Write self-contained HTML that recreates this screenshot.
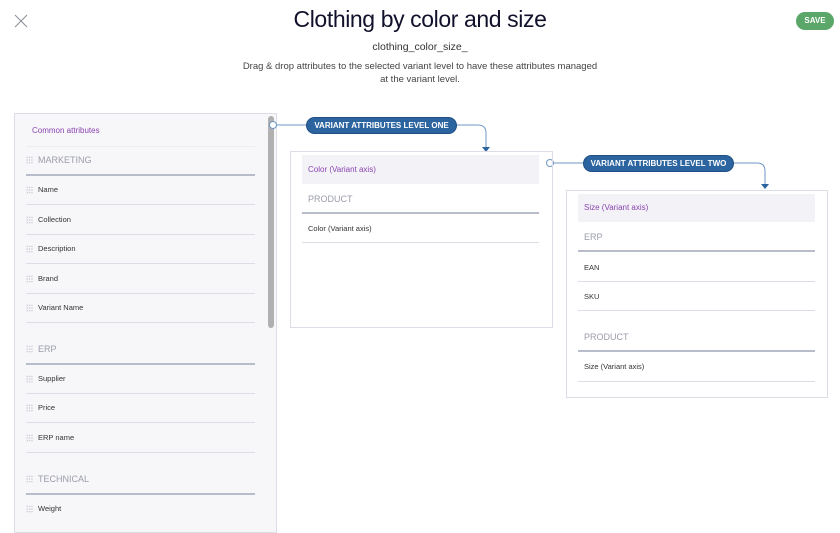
<!DOCTYPE html>
<html><head><meta charset="utf-8"><style>
*{margin:0;padding:0;box-sizing:border-box}
body{width:840px;height:521px;overflow:hidden;background:#fff;font-family:"Liberation Sans",sans-serif;position:relative;color:#222}
.a{position:absolute}
.t{position:absolute;white-space:nowrap}
.line{position:absolute;height:1px;background:#dcdde6}
.thick{position:absolute;height:2px;background:#b8bccb}
.grp{color:#9a9daa;font-size:9px}
.it{font-size:7.5px;color:#333}
.dots{position:absolute;width:7px;height:8px;background-image:radial-gradient(circle,#c4c6d0 0.6px,transparent 0.8px);background-size:2.4px 2.7px}
.pill{position:absolute;background:#2c64a0;color:#fff;font-weight:bold;font-size:8px;border-radius:9px;text-align:center;border:1px solid #1f4f85}
</style></head><body>
<svg class="a" style="left:14px;top:14px" width="14" height="14"><path d="M1 1L13 13M13 1L1 13" stroke="#8a8d99" stroke-width="1"/></svg>
<div class="t" style="left:0;width:840px;text-align:center;top:6px;font-size:23px;color:#11112c;letter-spacing:-0.4px">Clothing by color and size</div>
<div class="t" style="left:0;width:840px;text-align:center;top:41px;font-size:10.5px;color:#333">clothing_color_size_</div>
<div class="t" style="left:0;width:840px;text-align:center;top:60px;font-size:9.5px;color:#444;line-height:13px;white-space:normal;padding:0 240px">Drag &amp; drop attributes to the selected variant level to have these attributes managed at the variant level.</div>
<div class="a" style="left:796px;top:12px;width:38px;height:18px;background:#5aa769;border-radius:9px;color:#fff;font-size:8px;font-weight:bold;text-align:center;line-height:18px">SAVE</div>

<div class="a" style="left:14px;top:113px;width:263px;height:420px;background:#f7f7f9;border:1px solid #dcdde6"></div>
<div class="a" style="left:268px;top:116px;width:6px;height:212px;background:#b0b0b0;border-radius:3px"></div>
<div class="t" style="left:32px;top:126px;font-size:8px;color:#8a44b0">Common attributes</div>
<div class="line" style="left:26px;top:146px;width:229px;background:#ececf1"></div>
<div class="dots" style="left:26px;top:156px"></div><div class="t grp" style="left:38px;top:155px">MARKETING</div>
<div class="thick" style="left:26px;top:174px;width:229px"></div>
<div class="dots" style="left:26px;top:186px"></div><div class="t it" style="left:38px;top:185px">Name</div>
<div class="line" style="left:26px;top:204px;width:229px"></div>
<div class="dots" style="left:26px;top:216px"></div><div class="t it" style="left:38px;top:215px">Collection</div>
<div class="line" style="left:26px;top:234px;width:229px"></div>
<div class="dots" style="left:26px;top:245px"></div><div class="t it" style="left:38px;top:244px">Description</div>
<div class="line" style="left:26px;top:263px;width:229px"></div>
<div class="dots" style="left:26px;top:275px"></div><div class="t it" style="left:38px;top:274px">Brand</div>
<div class="line" style="left:26px;top:293px;width:229px"></div>
<div class="dots" style="left:26px;top:304px"></div><div class="t it" style="left:38px;top:303px">Variant Name</div>
<div class="line" style="left:26px;top:322px;width:229px"></div>
<div class="dots" style="left:26px;top:345px"></div><div class="t grp" style="left:38px;top:344px">ERP</div>
<div class="thick" style="left:26px;top:363px;width:229px"></div>
<div class="dots" style="left:26px;top:375px"></div><div class="t it" style="left:38px;top:374px">Supplier</div>
<div class="line" style="left:26px;top:393px;width:229px"></div>
<div class="dots" style="left:26px;top:404px"></div><div class="t it" style="left:38px;top:403px">Price</div>
<div class="line" style="left:26px;top:422px;width:229px"></div>
<div class="dots" style="left:26px;top:434px"></div><div class="t it" style="left:38px;top:433px">ERP name</div>
<div class="line" style="left:26px;top:452px;width:229px"></div>
<div class="dots" style="left:26px;top:475px"></div><div class="t grp" style="left:38px;top:474px">TECHNICAL</div>
<div class="thick" style="left:26px;top:493px;width:229px"></div>
<div class="dots" style="left:26px;top:505px"></div><div class="t it" style="left:38px;top:504px">Weight</div>

<svg class="a" style="left:0;top:0" width="840" height="200">
<path d="M277 125H306M457 125H478Q486 125 486 133V147" fill="none" stroke="#6f98c6" stroke-width="1"/>
<path d="M482 147H490L486 152Z" fill="#2c64a0"/>
<circle cx="273" cy="125" r="3.5" fill="#fff" stroke="#6f98c6"/>
<path d="M554 163H583M733 163H757Q765 163 765 171V184" fill="none" stroke="#6f98c6" stroke-width="1"/>
<path d="M761 184H769L765 189Z" fill="#2c64a0"/>
<circle cx="550" cy="163" r="3.5" fill="#fff" stroke="#6f98c6"/>
</svg>
<div class="pill" style="left:306px;top:117px;width:151px;height:17px;line-height:15px">VARIANT ATTRIBUTES LEVEL ONE</div>
<div class="pill" style="left:583px;top:155px;width:151px;height:17px;line-height:15px">VARIANT ATTRIBUTES LEVEL TWO</div>

<div class="a" style="left:290px;top:151px;width:263px;height:177px;border:1px solid #dcdde6"></div>
<div class="a" style="left:302px;top:155px;width:237px;height:29px;background:#f3f3f7"></div>
<div class="t" style="left:308px;top:165px;font-size:8px;color:#8a44b0">Color (Variant axis)</div>
<div class="t grp" style="left:308px;top:194px">PRODUCT</div>
<div class="thick" style="left:302px;top:212px;width:237px"></div>
<div class="t it" style="left:308px;top:224px">Color (Variant axis)</div>
<div class="line" style="left:302px;top:242px;width:237px"></div>

<div class="a" style="left:566px;top:190px;width:262px;height:208px;border:1px solid #dcdde6"></div>
<div class="a" style="left:578px;top:194px;width:237px;height:28px;background:#f3f3f7"></div>
<div class="t" style="left:584px;top:203px;font-size:8px;color:#8a44b0">Size (Variant axis)</div>
<div class="t grp" style="left:584px;top:232px">ERP</div>
<div class="thick" style="left:578px;top:250px;width:237px"></div>
<div class="t it" style="left:584px;top:263px">EAN</div>
<div class="line" style="left:578px;top:281px;width:237px"></div>
<div class="t it" style="left:584px;top:292px">SKU</div>
<div class="line" style="left:578px;top:310px;width:237px"></div>
<div class="t grp" style="left:584px;top:332px">PRODUCT</div>
<div class="thick" style="left:578px;top:350px;width:237px"></div>
<div class="t it" style="left:584px;top:362px">Size (Variant axis)</div>
<div class="line" style="left:578px;top:381px;width:237px"></div>
</body></html>
